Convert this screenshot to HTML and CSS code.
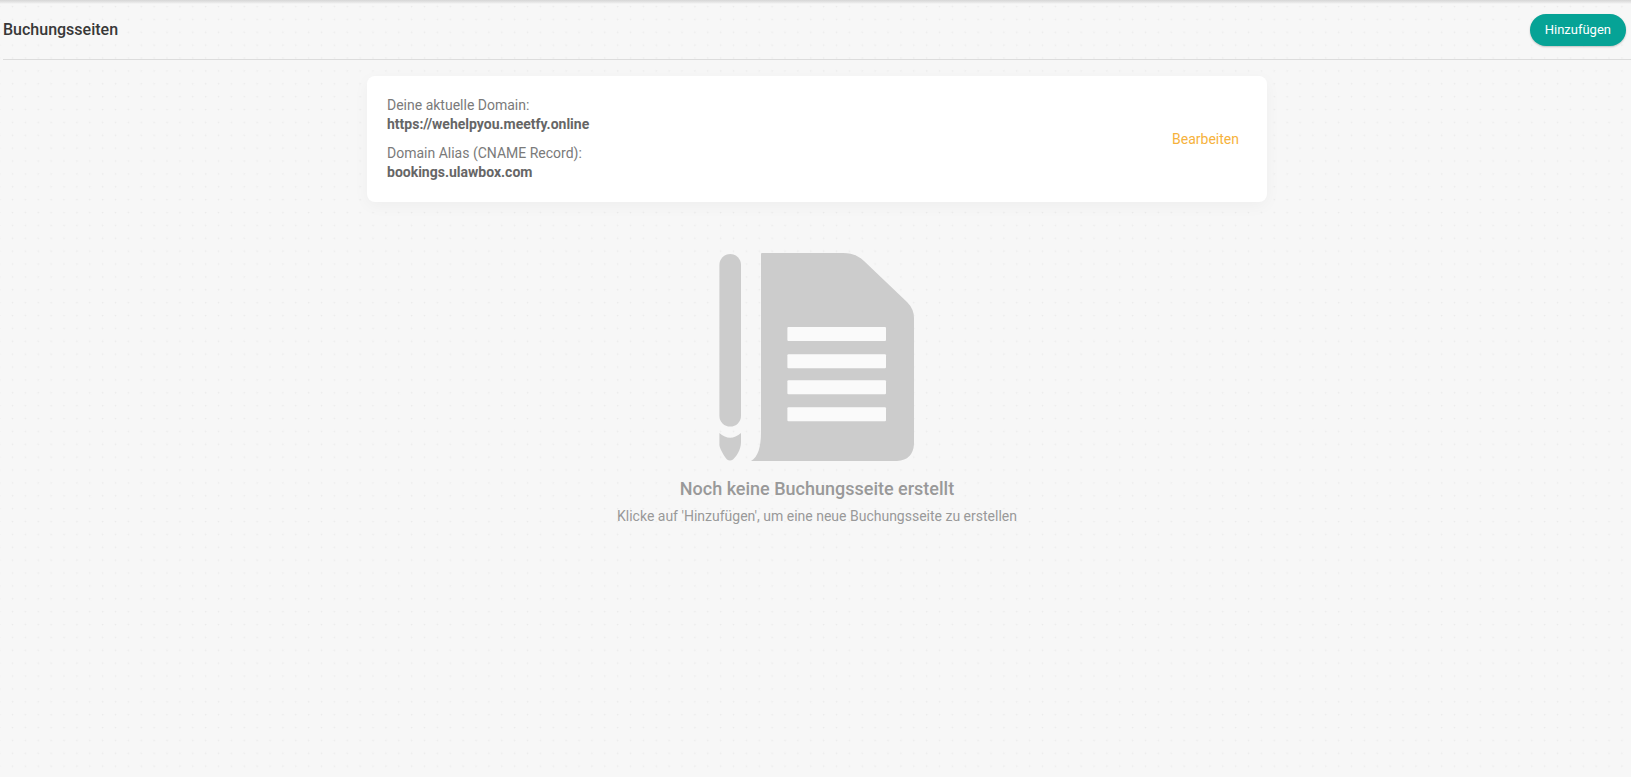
FILE: index.html
```html
<!DOCTYPE html>
<html lang="de">
<head>
<meta charset="utf-8">
<title>Buchungsseiten</title>
<link rel="stylesheet" href="styles.css">
</head>
<body>
<header class="toolbar">
  <h1 class="toolbar-title">Buchungsseiten</h1>
  <button class="add-button" type="button">Hinzufügen</button>
</header>
<main class="content">
  <section class="domain-card">
    <dl class="domain-list">
      <div class="domain-entry">
        <dt>Deine aktuelle Domain:</dt>
        <dd>https://wehelpyou.meetfy.online</dd>
      </div>
      <div class="domain-entry">
        <dt>Domain Alias (CNAME Record):</dt>
        <dd>bookings.ulawbox.com</dd>
      </div>
    </dl>
    <button class="edit-button" type="button">Bearbeiten</button>
  </section>
  <section class="empty-state">
    <svg class="empty-icon" viewBox="0 0 196 210" aria-hidden="true">
      <g fill="#ccc">
        <rect x=".4" y="2" width="21.600" height="172.600" rx="10.800"/>
        <path d="M.4 181Q11 190.500 22 181V190C22 198 17 205 14 207.500Q11 209.500 8 207.500C5 204 .4 196 .4 193Z"/>
        <path d="M42 2Q42 1 43 1H124C133 1 139 3.500 145 9L188 50Q195 57 195 66V192Q194 208 178 209H32C39 205 42 195 42 180Z"/>
      </g>
      <g fill="#fafafa">
        <rect x="68.400" y="75" width="98.600" height="14" rx="1"/>
        <rect x="68.400" y="102.200" width="98.600" height="14" rx="1"/>
        <rect x="68.400" y="128.200" width="98.600" height="14" rx="1"/>
        <rect x="68.400" y="155.200" width="98.600" height="14" rx="1"/>
      </g>
    </svg>
    <h2 class="empty-title">Noch keine Buchungsseite erstellt</h2>
    <p class="empty-text">Klicke auf 'Hinzufügen', um eine neue Buchungsseite zu erstellen</p>
  </section>
</main>
</body>
</html>
```
FILE: styles.css
```css
* {
  box-sizing: border-box;
}

body {
  margin: 0;
  min-height: 100vh;
  padding: 0 0 0 3px;
  font-family: Roboto, "Liberation Sans", sans-serif;
  font-size: 14px;
  color: #666;
  background-color: #f7f7f7;
  /* soft shade along the top edge, over a grid of faint dots */
  background-image:
    linear-gradient(#d6d6d6, #e4e4e4 2px, #f7f7f700 4px),
    url("data:image/svg+xml,%3Csvg xmlns='http://www.w3.org/2000/svg' width='103' height='103' viewBox='0 0 824 824'%3E%3Cpattern id='p' width='103' height='103' patternUnits='userSpaceOnUse'%3E%3Ccircle cx='52' cy='52' r='7' fill='%23ebebeb'/%3E%3C/pattern%3E%3Crect width='824' height='824' fill='url(%23p)'/%3E%3C/svg%3E");
  background-size: 100% 4px, 103px 103px;
  background-position: 0 0, 6px 0;
  background-repeat: no-repeat, repeat;
}

button {
  border: 0;
  font-family: inherit;
  cursor: pointer;
}

.toolbar {
  display: flex;
  align-items: center;
  justify-content: space-between;
  height: 60px;
  padding-right: 5px;
  border-bottom: 1px solid #dcdcdc;
}

.toolbar-title {
  margin: 0;
  font-size: 16px;
  font-weight: 500;
  color: #383838;
}

.add-button {
  height: 32px;
  padding: 0 15px;
  border-radius: 16px;
  font-size: 13px;
  color: #fff;
  background: #06a396;
  box-shadow: 0 1px 2px rgba(0, 0, 0, 0.22);
}

.content {
  display: flex;
  flex-direction: column;
  align-items: center;
  padding: 16px 0;
}

.domain-card {
  display: flex;
  align-items: center;
  justify-content: space-between;
  width: 100%;
  max-width: 900px;
  padding: 20px;
  border-radius: 8px;
  background: #fff;
  box-shadow: 0 4px 16px rgba(0, 0, 0, 0.04);
}

.domain-list {
  display: flex;
  flex-direction: column;
  gap: 10px;
  margin: 0;
  line-height: 19px;
}

.domain-entry dt {
  color: #7a7a7a;
}

.domain-entry dd {
  margin: 0;
  font-weight: 700;
  color: #666;
}

.edit-button {
  padding: 8px;
  font-size: 14px;
  color: #f6b23c;
  background: none;
}

.empty-state {
  display: flex;
  flex-direction: column;
  align-items: center;
  margin-top: 50px;
  text-align: center;
  color: #999;
}

.empty-icon {
  width: 196px;
  height: 210px;
}

.empty-title {
  margin: 15px 0 0;
  font-size: 18px;
  font-weight: 500;
  line-height: 24px;
}

.empty-text {
  margin: 5px 0 0;
  line-height: 20px;
}
```
